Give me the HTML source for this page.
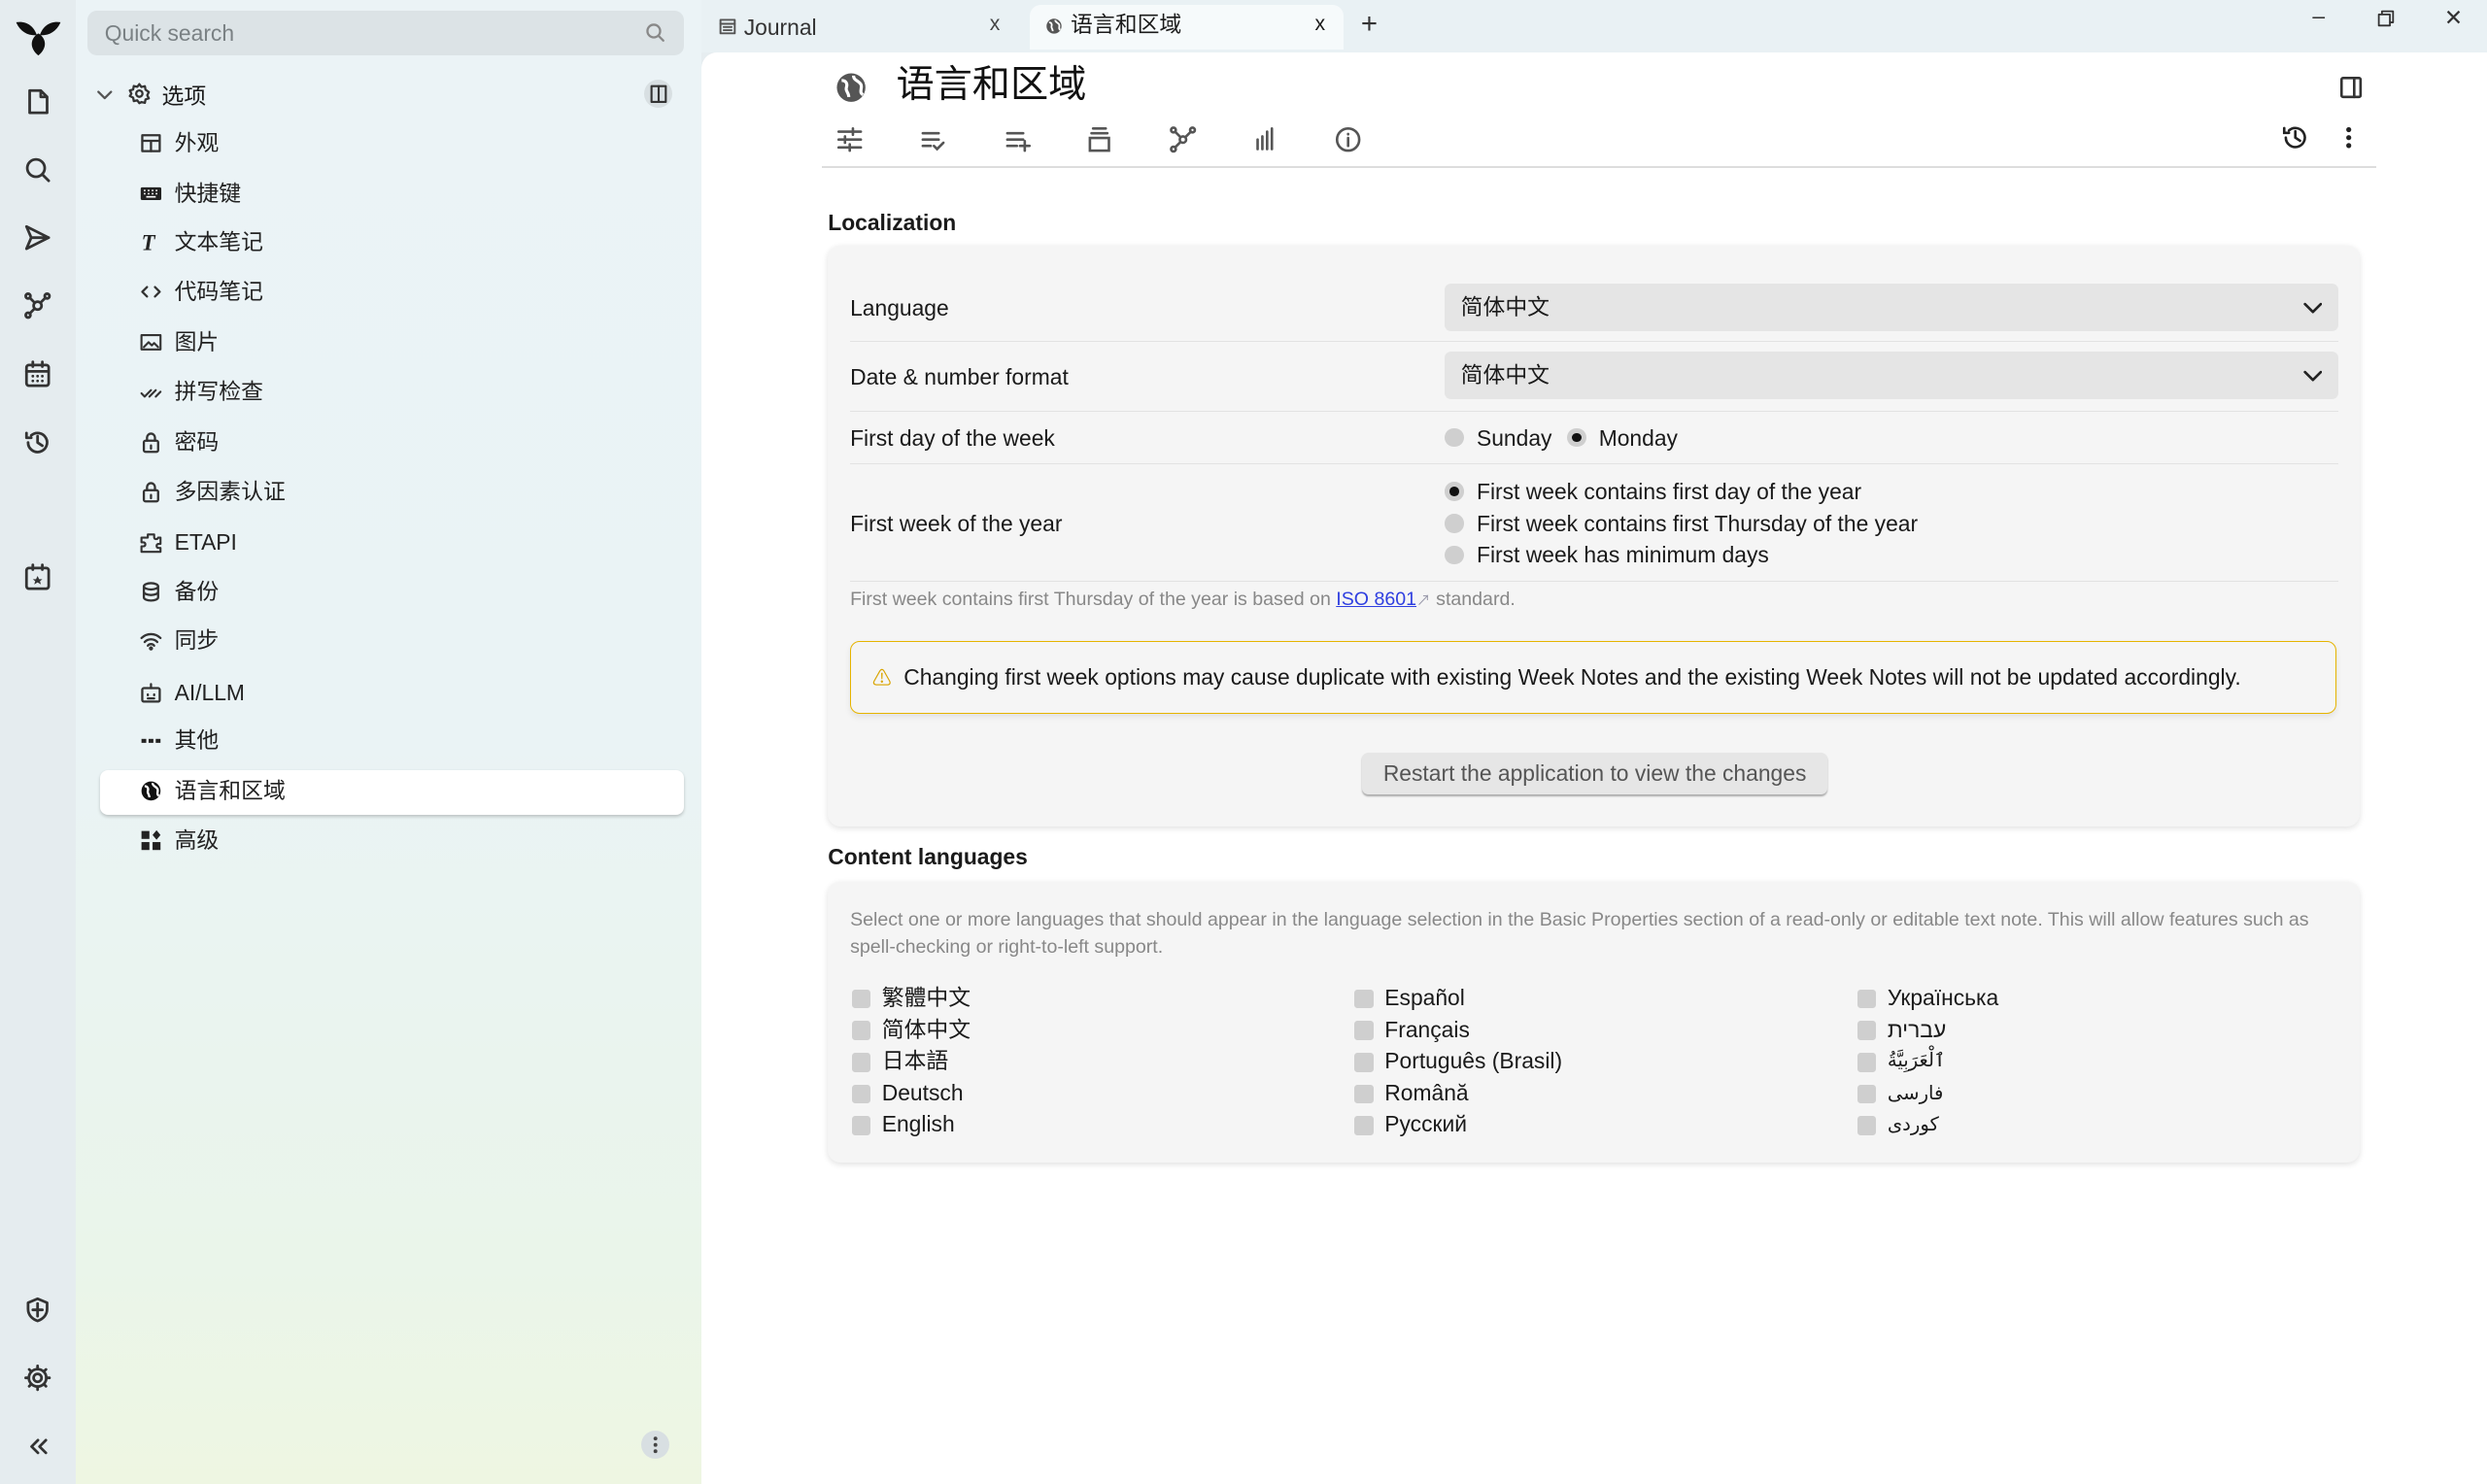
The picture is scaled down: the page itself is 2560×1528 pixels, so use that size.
<!DOCTYPE html>
<html><head><meta charset="utf-8">
<style>
html,body{margin:0;padding:0;overflow:hidden}
html{width:2560px;height:1528px;background:#e6edf0}
body{zoom:1.63265;width:1568px;height:936px;position:relative;font-family:"Liberation Sans","Noto Sans CJK SC",sans-serif;color:#1a1a1a;font-size:14px}
.abs{position:absolute}
.rail{left:0;top:0;width:48px;height:936px;background:#e5ecef}
.side{left:48px;top:0;width:394px;height:936px;background:linear-gradient(180deg,#ebf3f6 0%,#eaf3f5 50%,#eaf5ea 85%,#eef6e2 100%)}
.top{left:442px;top:0;width:1126px;height:33px;background:#e9f1f4}
.main{left:442px;top:33px;width:1126px;height:903px;background:#fff;border-top-left-radius:10px}
.ic{position:absolute;fill:none;stroke:#333;stroke-width:1.7;stroke-linecap:round;stroke-linejoin:round}
.item{position:absolute;left:88px;height:20px;line-height:20px;font-size:14px;color:#222}
.item svg{position:absolute;left:0;top:3px;width:14px;height:14px}
.item span{position:absolute;left:22px;white-space:nowrap}
.card{position:absolute;background:#f5f5f5;border-radius:8px;box-shadow:0 1px 4px rgba(0,0,0,.12)}
.row{position:absolute;left:14px;right:14px;border-bottom:1px solid #e2e2e2}
.sel{position:absolute;left:389px;width:563px;height:30px;background:#e5e5e5;border-radius:4px;line-height:30px}
.sel span{position:absolute;left:10px}
.sel svg{position:absolute;right:10px;top:10px}
.radio{position:absolute;width:12px;height:12px;border-radius:50%;background:#cfcfcf}
.radio.on::after{content:"";position:absolute;left:3px;top:3px;width:6px;height:6px;border-radius:50%;background:#111}
.cb{position:absolute;width:12px;height:12px;background:#cfcfcf;border-radius:2px}
.lbl{position:absolute;white-space:nowrap;line-height:17px}
.tb svg{position:absolute;width:18px;height:18px;fill:none;stroke:#555;stroke-width:1.6;stroke-linecap:round}
</style></head><body>
<div class="abs rail"></div>
<div class="abs side"></div>
<div class="abs top"></div>
<div class="abs main"></div>

<svg class="abs" style="left:9px;top:11px" width="30" height="26" viewBox="0 0 30 26"><path d="M15 24 C9 19 10 13 15 10 C20 13 21 19 15 24Z M14 11 C8 12 3 8 1 3 C7 2 12 5 14 11Z M16 11 C18 5 23 2 29 3 C27 8 22 12 16 11Z" fill="#111"/></svg>
<svg class="ic" style="left:15px;top:55px" width="18" height="18" viewBox="0 0 18 18"><path d="M4 2h7l4 4v10H4z M11 2v4h4"/></svg>
<svg class="ic" style="left:15px;top:98px" width="18" height="18" viewBox="0 0 18 18"><circle cx="8" cy="8" r="5.5"/><path d="M12 12l4 4"/></svg>
<svg class="ic" style="left:15px;top:141px" width="18" height="18" viewBox="0 0 18 18"><path d="M2 2l14 7-14 7 3-7z M5 9h11"/></svg>
<svg class="ic" style="left:15px;top:184px" width="18" height="18" viewBox="0 0 18 18"><circle cx="9" cy="9" r="2.5"/><circle cx="3" cy="3" r="1.5"/><circle cx="15" cy="3" r="1.5"/><circle cx="3" cy="15" r="1.5"/><path d="M4 4l3 3M14 4l-3 3M4 14l3-3"/></svg>
<svg class="ic" style="left:15px;top:227px" width="18" height="18" viewBox="0 0 18 18"><rect x="2" y="3" width="14" height="13" rx="1.5"/><path d="M2 7h14M6 1v3M12 1v3M6 10h0M9 10h0M12 10h0M6 13h0M9 13h0M12 13h0"/></svg>
<svg class="ic" style="left:15px;top:270px" width="18" height="18" viewBox="0 0 18 18"><path d="M3 9a6 6 0 1 0 2-4.5M2 3v3h3M9 5v4l3 2"/></svg>
<svg class="ic" style="left:15px;top:355px" width="18" height="18" viewBox="0 0 18 18"><rect x="2" y="3" width="14" height="13" rx="1.5"/><path d="M6 1v3M12 1v3"/><path d="M9 8l1 2h2l-1.5 1.3.6 2L9 12l-2.1 1.3.6-2L6 10h2z" fill="#333" stroke="none"/></svg>
<svg class="ic" style="left:15px;top:817px" width="18" height="18" viewBox="0 0 18 18"><path d="M9 2l6 2.5v4C15 12.5 12 15 9 16 6 15 3 12.5 3 8.5v-4z"/><path d="M9 5v8M6 9h6"/></svg>
<svg class="ic" style="left:15px;top:860px" width="18" height="18" viewBox="0 0 18 18"><circle cx="9" cy="9" r="2.5"/><path d="M9 1.5v2M9 14.5v2M1.5 9h2M14.5 9h2M3.7 3.7l1.4 1.4M12.9 12.9l1.4 1.4M3.7 14.3l1.4-1.4M12.9 5.1l1.4-1.4"/><circle cx="9" cy="9" r="5.5"/></svg>
<svg class="ic" style="left:16px;top:905px" width="16" height="14" viewBox="0 0 16 14"><path d="M8 3l-4 4 4 4M13 3l-4 4 4 4"/></svg>

<div class="abs" style="left:55px;top:7px;width:376px;height:28px;background:#dce3e6;border-radius:6px"></div>
<div class="abs" style="left:66px;top:13px;font-size:14px;color:#7a8184">Quick search</div>
<svg class="ic" style="left:407px;top:14px;stroke:#888;stroke-width:1.4" width="13" height="13" viewBox="0 0 13 13"><circle cx="5.5" cy="5.5" r="4"/><path d="M8.5 8.5l3 3"/></svg>

<svg class="ic" style="left:60px;top:54px;stroke-width:1.4;stroke:#555" width="12" height="12" viewBox="0 0 12 12"><path d="M2 4l4 4 4-4"/></svg>
<svg class="ic" style="left:81px;top:52px;stroke-width:1.4" width="14" height="14" viewBox="0 0 14 14"><circle cx="7" cy="7" r="2"/><path d="M7 1l1.3 1.8 2.2-.5.4 2.2L13 6l-1 2 1 2-2.1.6-.4 2.2-2.2-.5L7 13l-1.3-1.8-2.2.5-.4-2.2L1 8.5l1-1.5-1-2 2.1-.6.4-2.2 2.2.5z"/></svg>
<div class="abs" style="left:102px;top:49px;font-size:14px">选项</div>
<div class="abs" style="left:406px;top:50px;width:18px;height:18px;border-radius:50%;background:#d8dfe2"></div>
<svg class="ic" style="left:410px;top:53px;stroke-width:1.3" width="11" height="12" viewBox="0 0 11 12"><rect x="1" y="1" width="9" height="10"/><path d="M5.5 1v10"/></svg>

<div class="abs" style="left:63px;top:486px;width:368px;height:28px;background:#fff;border-radius:5px;box-shadow:0 1px 2px rgba(0,0,0,.2)"></div>

<div class="item" style="top:80px"><svg viewBox="0 0 14 14" class="ic" style="stroke-width:1.4"><rect x="1.5" y="2" width="11" height="10"/><path d="M1.5 5.5h11M7 5.5V12"/></svg><span>外观</span></div>
<div class="item" style="top:112px"><svg viewBox="0 0 14 14"><rect x="0.5" y="3" width="13" height="8" rx="1" fill="#222"/><path d="M2.5 5h1M5 5h1M7.5 5h1M10 5h1M2.5 7h1M5 7h1M7.5 7h1M10 7h1M4 9h6" stroke="#fff" stroke-width="1"/></svg><span>快捷键</span></div>
<div class="item" style="top:143px"><svg viewBox="0 0 14 14"><text x="1" y="12" font-family="Liberation Serif" font-style="italic" font-weight="bold" font-size="14" fill="#222">T</text></svg><span>文本笔记</span></div>
<div class="item" style="top:174px"><svg viewBox="0 0 14 14" class="ic" style="stroke-width:1.4"><path d="M4.5 4L1.5 7l3 3M9.5 4l3 3-3 3"/></svg><span>代码笔记</span></div>
<div class="item" style="top:206px"><svg viewBox="0 0 14 14" class="ic" style="stroke-width:1.3"><rect x="1" y="2.5" width="12" height="9"/><path d="M2.5 10l3-3 2 2 1.5-1.5 2.5 2.5" /></svg><span>图片</span></div>
<div class="item" style="top:237px"><svg viewBox="0 0 14 14" class="ic" style="stroke-width:1.3"><path d="M1 8l2 2 4-4M6 10l4-4M10 10l3-3"/></svg><span>拼写检查</span></div>
<div class="item" style="top:269px"><svg viewBox="0 0 14 14" class="ic" style="stroke-width:1.4"><rect x="2.5" y="6" width="9" height="7" rx="1"/><path d="M4.5 6V4a2.5 2.5 0 0 1 5 0v2M7 9v2"/></svg><span>密码</span></div>
<div class="item" style="top:300px"><svg viewBox="0 0 14 14" class="ic" style="stroke-width:1.4"><rect x="2.5" y="6" width="9" height="7" rx="1"/><path d="M4.5 6V4a2.5 2.5 0 0 1 5 0v2M7 9v2"/></svg><span>多因素认证</span></div>
<div class="item" style="top:332px"><svg viewBox="0 0 14 14" class="ic" style="stroke-width:1.3"><path d="M5 2h4v2a1.3 1.3 0 0 0 2.5 0H13v4h-1.5a1.3 1.3 0 0 0 0 2.5H13V13H1V9.5h1.5a1.3 1.3 0 0 0 0-2.5H1V4h4z"/></svg><span>ETAPI</span></div>
<div class="item" style="top:363px"><svg viewBox="0 0 14 14" class="ic" style="stroke-width:1.4"><ellipse cx="7" cy="3.5" rx="4.5" ry="2"/><path d="M2.5 3.5v7c0 1.1 2 2 4.5 2s4.5-.9 4.5-2v-7M2.5 7c0 1.1 2 2 4.5 2s4.5-.9 4.5-2"/></svg><span>备份</span></div>
<div class="item" style="top:394px"><svg viewBox="0 0 14 14" class="ic" style="stroke-width:1.4"><path d="M1 5.5a8.5 8.5 0 0 1 12 0M3 8a5.5 5.5 0 0 1 8 0M5 10.3a2.5 2.5 0 0 1 4 0"/><circle cx="7" cy="12" r=".6"/></svg><span>同步</span></div>
<div class="item" style="top:427px"><svg viewBox="0 0 14 14" class="ic" style="stroke-width:1.4"><rect x="1.5" y="4" width="11" height="8.5" rx="1"/><path d="M7 1.5V4M5 8v.5M9 8v.5M5 10.5h4"/></svg><span>AI/LLM</span></div>
<div class="item" style="top:457px"><svg viewBox="0 0 14 14"><rect x="1" y="6" width="3" height="2.5" fill="#222"/><rect x="5.5" y="6" width="3" height="2.5" fill="#222"/><rect x="10" y="6" width="3" height="2.5" fill="#222"/></svg><span>其他</span></div>
<div class="item" style="top:489px"><svg viewBox="0 0 14 14"><circle cx="7" cy="7" r="6" fill="#111"/><path d="M3 4c2 0 2.5 1.5 2 3s1 2 1 4M8 2c0 2 2 2 3 3.5S10 9 12 10" stroke="#fff" stroke-width="1.4" fill="none"/></svg><span>语言和区域</span></div>
<div class="item" style="top:520px"><svg viewBox="0 0 14 14" fill="#222"><rect x="1" y="1" width="5" height="5"/><rect x="1" y="8" width="5" height="5"/><rect x="8" y="8" width="5" height="5"/><path d="M10.5 0.5l2.5 3-2.5 3-2.5-3z"/></svg><span>高级</span></div>

<div class="abs" style="left:404px;top:902px;width:18px;height:18px;border-radius:50%;background:#d8dfe2"></div>
<svg class="abs" style="left:404px;top:902px" width="18" height="18" viewBox="0 0 18 18" fill="#444"><circle cx="9" cy="5" r="1.2"/><circle cx="9" cy="9" r="1.2"/><circle cx="9" cy="13" r="1.2"/></svg>

<svg class="ic" style="left:453px;top:11px;stroke-width:1.2;stroke:#555" width="11" height="11" viewBox="0 0 11 11"><rect x="1" y="1.5" width="9" height="8.5"/><path d="M1 4h9M3 6h5M3 8h5"/></svg>
<div class="abs" style="left:469px;top:9px;font-size:14px;color:#333">Journal</div>
<div class="abs" style="left:624px;top:8px;font-size:13px;color:#444">x</div>
<div class="abs" style="left:649px;top:3px;width:198px;height:28px;background:#f6fafb;border-radius:7px 7px 0 0"></div>
<svg class="abs" style="left:659px;top:11px" width="11" height="11" viewBox="0 0 14 14"><circle cx="7" cy="7" r="6" fill="#555"/><path d="M3 4c2 0 2.5 1.5 2 3s1 2 1 4M8 2c0 2 2 2 3 3.5S10 9 12 10" stroke="#fff" stroke-width="1.4" fill="none"/></svg>
<div class="abs" style="left:675px;top:7px;font-size:14px;line-height:18px">语言和区域</div>
<div class="abs" style="left:829px;top:8px;font-size:13px">x</div>
<div class="abs" style="left:858px;top:5px;font-size:18px;color:#333">+</div>
<div class="abs" style="left:1458px;top:2px;font-size:14px;color:#333">–</div>
<svg class="ic" style="left:1499px;top:6px;stroke-width:1.1" width="11" height="11" viewBox="0 0 11 11"><rect x="1" y="3" width="7" height="7"/><path d="M3 3V1h7v7H8"/></svg>
<div class="abs" style="left:1541px;top:3px;font-size:14px;color:#333">✕</div>

<svg class="abs" style="left:526px;top:45px" width="21" height="21" viewBox="0 0 14 14"><circle cx="7" cy="7" r="6" fill="#555"/><path d="M3 4c2 0 2.5 1.5 2 3s1 2 1 4M8 2c0 2 2 2 3 3.5S10 9 12 10" stroke="#fff" stroke-width="1.3" fill="none"/></svg>
<div class="abs" style="left:565px;top:40px;font-size:24px;line-height:28px;color:#111">语言和区域</div>
<svg class="ic" style="left:1474px;top:47px;stroke-width:1.6" width="16" height="16" viewBox="0 0 16 16"><rect x="2" y="2" width="12" height="12" rx="1"/><path d="M10 2v12"/></svg>

<div class="tb">
<svg style="left:527px;top:79px" viewBox="0 0 18 18"><path d="M2 4h14M2 9h14M2 14h14M11 2v4M6 7v4M9 12v4"/></svg>
<svg style="left:579px;top:79px" viewBox="0 0 18 18"><path d="M3 5h10M3 9h10M3 13h5M10 13l2 2 4-4"/></svg>
<svg style="left:632px;top:79px" viewBox="0 0 18 18"><path d="M3 5h10M3 9h10M3 13h6M14 10v6M11 13h6"/></svg>
<svg style="left:684px;top:79px" viewBox="0 0 18 18"><path d="M5 2h8M4 5h10"/><rect x="3" y="8" width="12" height="8"/></svg>
<svg style="left:737px;top:79px" viewBox="0 0 18 18"><circle cx="9" cy="9" r="2"/><circle cx="3" cy="3" r="1.5"/><circle cx="15" cy="3" r="1.5"/><circle cx="3" cy="15" r="1.5"/><path d="M4 4l3 3M14 4l-3 3M4 14l3-3"/></svg>
<svg style="left:789px;top:79px" viewBox="0 0 18 18"><path d="M4 9v6M7 7v8M10 4v11M13 2v13"/></svg>
<svg style="left:841px;top:79px" viewBox="0 0 18 18"><circle cx="9" cy="9" r="7"/><path d="M9 8v5M9 5.5v.2"/></svg>
<svg style="left:1438px;top:78px;stroke:#222" viewBox="0 0 18 18"><path d="M3 9a6 6 0 1 0 2-4.5M2 3v3h3M9 5v4l3 2"/></svg>
<svg style="left:1472px;top:78px" viewBox="0 0 18 18"><circle cx="9" cy="4" r=".8" fill="#222" stroke="#222"/><circle cx="9" cy="9" r=".8" fill="#222" stroke="#222"/><circle cx="9" cy="14" r=".8" fill="#222" stroke="#222"/></svg>
</div>
<div class="abs" style="left:518px;top:105px;width:980px;height:1px;background:#ddd"></div>

<div class="abs" style="left:522px;top:132px;font-size:14px;font-weight:bold">Localization</div>
<div class="card" style="left:522px;top:155px;width:966px;height:366px">
  <div class="lbl" style="left:14px;top:31px">Language</div>
  <div class="sel" style="top:24px"><span>简体中文</span><svg class="ic" width="12" height="10" viewBox="0 0 12 10" style="position:absolute;stroke:#222;stroke-width:1.6"><path d="M1 2.5l5 5 5-5"/></svg></div>
  <div class="row" style="top:60px"></div>
  <div class="lbl" style="left:14px;top:75px">Date &amp; number format</div>
  <div class="sel" style="top:67px"><span>简体中文</span><svg class="ic" width="12" height="10" viewBox="0 0 12 10" style="position:absolute;stroke:#222;stroke-width:1.6"><path d="M1 2.5l5 5 5-5"/></svg></div>
  <div class="row" style="top:104px"></div>
  <div class="radio" style="left:389px;top:115px"></div><div class="lbl" style="left:409px;top:113px">Sunday</div>
  <div class="radio on" style="left:466px;top:115px"></div><div class="lbl" style="left:486px;top:113px">Monday</div>
  <div class="lbl" style="left:14px;top:113px">First day of the week</div>
  <div class="row" style="top:137px"></div>
  <div class="lbl" style="left:14px;top:167px">First week of the year</div>
  <div class="radio on" style="left:389px;top:149px"></div><div class="lbl" style="left:409px;top:147px">First week contains first day of the year</div>
  <div class="radio" style="left:389px;top:169px"></div><div class="lbl" style="left:409px;top:167px">First week contains first Thursday of the year</div>
  <div class="radio" style="left:389px;top:189px"></div><div class="lbl" style="left:409px;top:187px">First week has minimum days</div>
  <div class="row" style="top:211px"></div>
  <div class="lbl" style="left:14px;top:215px;font-size:12px;color:#888">First week contains first Thursday of the year is based on <span style="color:#2f3fe0;text-decoration:underline">ISO 8601</span><span style="font-size:9px;color:#99a">↗</span> standard.</div>
  <div class="abs" style="left:14px;top:249px;width:936px;height:45px;border:1px solid #e6b400;border-radius:6px;box-shadow:0 2px 4px rgba(0,0,0,.08)"></div>
  <div class="lbl" style="left:28px;top:264px"><span style="color:#d9a400;font-size:12px">⚠</span>&nbsp; Changing first week options may cause duplicate with existing Week Notes and the existing Week Notes will not be updated accordingly.</div>
  <div class="abs" style="left:337px;top:320px;width:293px;height:26px;background:#e6e6e6;border-radius:4px;box-shadow:0 1px 1px rgba(0,0,0,.3);line-height:26px;text-align:center;color:#555">Restart the application to view the changes</div>
</div>

<div class="abs" style="left:522px;top:532px;font-size:14px;font-weight:bold">Content languages</div>
<div class="card" style="left:522px;top:556px;width:966px;height:177px">
  <div class="lbl" style="left:14px;top:16px;font-size:12px;color:#888;white-space:normal;width:940px;line-height:17px">Select one or more languages that should appear in the language selection in the Basic Properties section of a read-only or editable text note. This will allow features such as spell-checking or right-to-left support.</div>
  <div class="cb" style="left:15px;top:68px"></div><div class="lbl" style="left:34px;top:65px">繁體中文</div>
  <div class="cb" style="left:15px;top:88px"></div><div class="lbl" style="left:34px;top:85px">简体中文</div>
  <div class="cb" style="left:15px;top:108px"></div><div class="lbl" style="left:34px;top:105px">日本語</div>
  <div class="cb" style="left:15px;top:128px"></div><div class="lbl" style="left:34px;top:125px">Deutsch</div>
  <div class="cb" style="left:15px;top:148px"></div><div class="lbl" style="left:34px;top:145px">English</div>
  <div class="cb" style="left:332px;top:68px"></div><div class="lbl" style="left:351px;top:65px">Español</div>
  <div class="cb" style="left:332px;top:88px"></div><div class="lbl" style="left:351px;top:85px">Français</div>
  <div class="cb" style="left:332px;top:108px"></div><div class="lbl" style="left:351px;top:105px">Português (Brasil)</div>
  <div class="cb" style="left:332px;top:128px"></div><div class="lbl" style="left:351px;top:125px">Română</div>
  <div class="cb" style="left:332px;top:148px"></div><div class="lbl" style="left:351px;top:145px">Русский</div>
  <div class="cb" style="left:649px;top:68px"></div><div class="lbl" style="left:668px;top:65px">Українська</div>
  <div class="cb" style="left:649px;top:88px"></div><div class="lbl" style="left:668px;top:85px">עברית</div>
  <div class="cb" style="left:649px;top:108px"></div><div class="lbl" style="left:668px;top:104px;font-family:'DejaVu Sans',sans-serif;font-size:12px">ٱلْعَرَبِيَّةُ</div>
  <div class="cb" style="left:649px;top:128px"></div><div class="lbl" style="left:668px;top:125px;font-family:'DejaVu Sans',sans-serif;font-size:12px">فارسی</div>
  <div class="cb" style="left:649px;top:148px"></div><div class="lbl" style="left:668px;top:145px;font-family:'DejaVu Sans',sans-serif;font-size:12px">کوردی</div>
</div>
</body></html>
